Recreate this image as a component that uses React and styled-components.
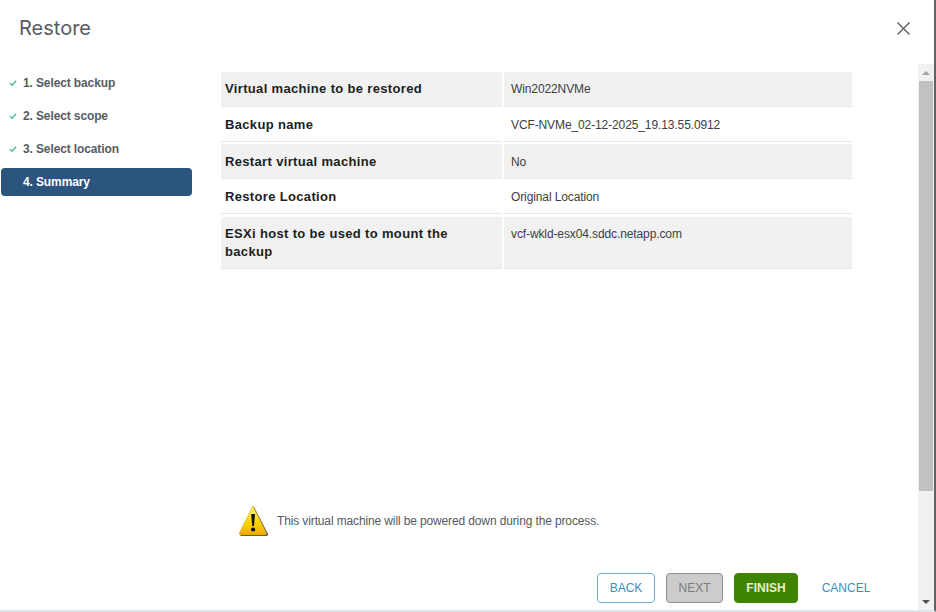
import React from 'react';
import styled, { createGlobalStyle } from 'styled-components';

const GlobalStyle = createGlobalStyle`
  html, body {
    margin: 0;
    padding: 0;
    background: #ffffff;
  }
  body {
    font-family: "Liberation Sans", Arial, sans-serif;
  }
`;

const Dialog = styled('div')`
  box-sizing: border-box;
  width: 936px;
  height: 612px;
  background-color: #ffffff;
  border-right: 2px solid #5f6468;
  border-bottom: 2px solid #dfe5e8;
  display: flex;
  overflow: hidden;
`;

const Content = styled('div')`
  flex: 1;
  min-width: 0;
  display: flex;
  flex-direction: column;
`;

const Header = styled('div')`
  height: 64px;
  flex-shrink: 0;
  padding: 15px 0 0 19px;
  box-sizing: border-box;
`;

const Title = styled('h1')`
  margin: 0;
  font-family: Inter, "Noto Sans", sans-serif;
  font-size: 20px;
  line-height: 26px;
  font-weight: 400;
  color: #565c60;
`;

const Body = styled('div')`
  flex: 1;
  display: flex;
  min-height: 0;
`;

const Sidebar = styled('nav')`
  width: 192px;
  flex-shrink: 0;
  padding: 5px 0 0 1px;
  box-sizing: border-box;
  display: flex;
  flex-direction: column;
  gap: 5px;
`;

const Step = styled('div')`
  height: 28px;
  display: flex;
  align-items: center;
  padding-left: 8px;
  border-radius: 4px;
  font-size: 12px;
  font-weight: 700;
  letter-spacing: -0.12px;
  color: ${props => (props.active ? '#ffffff' : '#565c60')};
  background-color: ${props => (props.active ? '#2b547e' : 'transparent')};
`;

const StepIcon = styled('svg')`
  width: 8px;
  height: 8px;
  margin-right: 6px;
  flex-shrink: 0;
`;

const StepSpacer = styled('span')`
  width: 14px;
  flex-shrink: 0;
`;

const Main = styled('main')`
  flex: 1;
  min-width: 0;
  padding: 8px 66px 8px 29px;
  display: flex;
  flex-direction: column;
`;

const SummaryTable = styled('div')`
  display: flex;
  flex-direction: column;
`;

const Row = styled('div')`
  display: grid;
  grid-template-columns: 281px 348px;
  column-gap: 2px;
  margin-bottom: ${props => props.gap}px;
`;

const Cell = styled('div')`
  box-sizing: border-box;
  height: ${props => props.height}px;
  padding: ${props => props.top}px 4px 0 ${props => (props.heading ? '4px' : '7px')};
  font-size: ${props => (props.heading ? '13px' : '12px')};
  font-weight: ${props => (props.heading ? 700 : 400)};
  letter-spacing: ${props => (props.heading ? '0.34px' : '-0.11px')};
  line-height: 18px;
  color: ${props => (props.heading ? '#1c1f22' : '#3c4043')};
  background-color: ${props => (props.shaded ? '#f1f1f1' : '#ffffff')};
  border-bottom: 1px solid #e4e9ec;
`;

const Notice = styled('div')`
  margin-top: auto;
  display: flex;
  align-items: center;
  padding-left: 17px;
  margin-bottom: 35px;
  font-size: 12px;
  letter-spacing: -0.13px;
  color: #55595c;
`;

const WarningIcon = styled('svg')`
  width: 32px;
  height: 34px;
  margin-right: 7px;
  flex-shrink: 0;
`;

const Footer = styled('div')`
  display: flex;
  justify-content: flex-end;
  align-items: center;
  gap: 11px;
  margin-right: -31px;
  margin-bottom: -1px;
`;

const Button = styled('button')`
  box-sizing: border-box;
  height: 30px;
  width: ${props => props.width}px;
  padding: 0;
  border-radius: 4px;
  font-family: "Liberation Sans", Arial, sans-serif;
  font-size: 12px;
  font-weight: 400;
  border: 1px solid transparent;
  color: #3d8ebf;
  background-color: #ffffff;
  ${props =>
    props.variant === 'outline' &&
    `
    border-color: #6fb0d3;
  `}
  ${props =>
    props.variant === 'disabled' &&
    `
    background-color: #cccccc;
    border-color: #8e8e8e;
    color: #7d7d7d;
  `}
  ${props =>
    props.variant === 'primary' &&
    `
    background-color: #3f8400;
    border-color: #3f8400;
    color: #e4f0d4;
    font-weight: 700;
  `}
`;

const CloseColumn = styled('div')`
  width: 16px;
  flex-shrink: 0;
  display: flex;
  flex-direction: column;
`;

const CloseSlot = styled('div')`
  height: 64px;
  flex-shrink: 0;
  position: relative;
`;

const CloseIcon = styled('svg')`
  position: absolute;
  top: 21px;
  right: 23px;
  width: 15px;
  height: 15px;
`;

const Scrollbar = styled('div')`
  flex: 1;
  display: flex;
  flex-direction: column;
  background-color: #f1f1f1;
`;

const Arrow = styled('div')`
  height: 17px;
  flex-shrink: 0;
  display: flex;
  align-items: center;
  justify-content: center;
  &::before {
    content: '';
    border-left: 4px solid transparent;
    border-right: 4px solid transparent;
    ${props =>
      props.up
        ? 'border-bottom: 4px solid #a3a3a3;'
        : 'border-top: 4px solid #505050;'}
  }
`;

const Thumb = styled('div')`
  height: 410px;
  flex-shrink: 0;
  margin: 0 1px;
  background-color: #c1c1c1;
`;

const ScrollGap = styled('div')`
  flex: 1;
`;

const steps = [
  { label: '1. Select backup', done: true },
  { label: '2. Select scope', done: true },
  { label: '3. Select location', done: true },
  { label: '4. Summary', active: true },
];

const rows = [
  { name: 'Virtual machine to be restored', value: 'Win2022NVMe', height: 35, gap: 0, top: 8, shaded: true },
  { name: 'Backup name', value: 'VCF-NVMe_02-12-2025_19.13.55.0912', height: 35, gap: 2, top: 9 },
  { name: 'Restart virtual machine', value: 'No', height: 35, gap: 0, top: 9, shaded: true },
  { name: 'Restore Location', value: 'Original Location', height: 35, gap: 3, top: 9 },
  { name: 'ESXi host to be used to mount the backup', value: 'vcf-wkld-esx04.sddc.netapp.com', height: 52, gap: 0, top: 8, shaded: true },
];

const App = () => (
  <>
    <GlobalStyle />
    <Dialog>
      <Content>
        <Header>
          <Title>Restore</Title>
        </Header>
        <Body>
          <Sidebar>
            {steps.map(step => (
              <Step key={step.label} active={step.active}>
                {step.done ? (
                  <StepIcon viewBox="0 0 8 8">
                    <path d="M1 4.2 L3.1 6.3 L7 1.8" fill="none" stroke="#3fbf8f" strokeWidth="1.3" />
                  </StepIcon>
                ) : (
                  <StepSpacer />
                )}
                {step.label}
              </Step>
            ))}
          </Sidebar>
          <Main>
            <SummaryTable>
              {rows.map(row => (
                <Row key={row.name} gap={row.gap}>
                  <Cell heading shaded={row.shaded} height={row.height} top={row.top}>
                    {row.name}
                  </Cell>
                  <Cell shaded={row.shaded} height={row.height} top={row.top}>
                    {row.value}
                  </Cell>
                </Row>
              ))}
            </SummaryTable>
            <Notice>
              <WarningIcon viewBox="0 0 32 34">
                <defs>
                  <linearGradient id="warnFill" x1="0" y1="0" x2="0" y2="1">
                    <stop offset="0" stopColor="#fff27a" />
                    <stop offset="0.55" stopColor="#ffd800" />
                    <stop offset="1" stopColor="#f0a800" />
                  </linearGradient>
                </defs>
                <path d="M16 3 L30 30 Q30.500 32 28 32 L4 32 Q1.500 32 2 30 Z" fill="#3a3a78" />
                <path d="M15 2 L28.500 29 Q29 31 27 31 L3 31 Q1 31 1.500 29 Z" fill="url(#warnFill)" stroke="#c9a400" strokeWidth="0.6" />
                <path d="M13.200 10 L17 10 L16 22 L14.200 22 Z" fill="#111111" />
                <circle cx="15.100" cy="25.500" r="2.100" fill="#111111" />
              </WarningIcon>
              This virtual machine will be powered down during the process.
            </Notice>
            <Footer>
              <Button variant="outline" width={58}>BACK</Button>
              <Button variant="disabled" width={57}>NEXT</Button>
              <Button variant="primary" width={64}>FINISH</Button>
              <Button width={74}>CANCEL</Button>
            </Footer>
          </Main>
        </Body>
      </Content>
      <CloseColumn>
        <CloseSlot>
          <CloseIcon viewBox="0 0 15 15">
            <path d="M1.500 1.500 L13.500 13.500 M13.500 1.500 L1.500 13.500" stroke="#60686d" strokeWidth="1.5" fill="none" />
          </CloseIcon>
        </CloseSlot>
        <Scrollbar>
          <Arrow up />
          <Thumb />
          <ScrollGap />
          <Arrow />
        </Scrollbar>
      </CloseColumn>
    </Dialog>
  </>
);

export default App;
